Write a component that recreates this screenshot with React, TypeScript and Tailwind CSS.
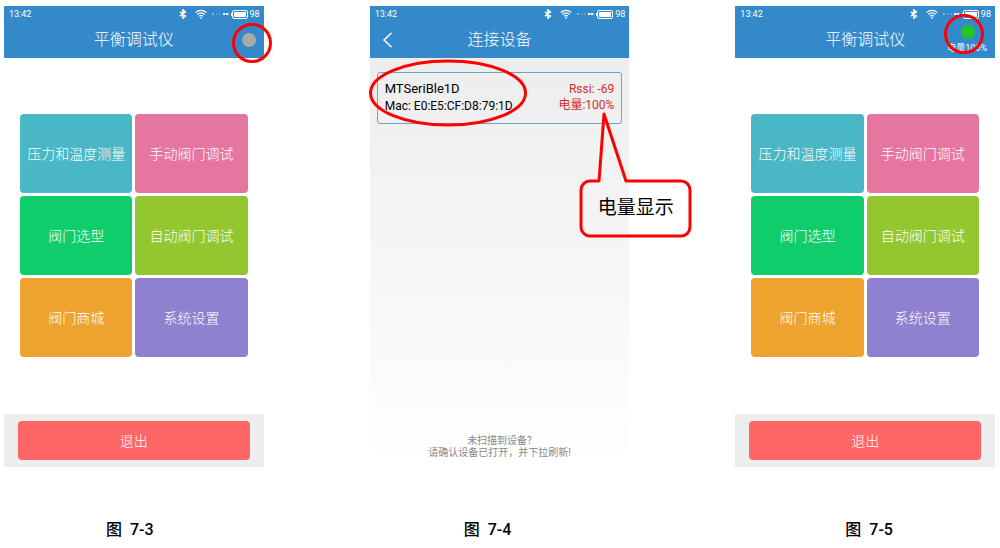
import type { ReactNode } from 'react';

const tiles = [
  { label: '压力和温度测量', color: 'bg-[#49b7c5]' },
  { label: '手动阀门调试', color: 'bg-[#e5769f]' },
  { label: '阀门选型', color: 'bg-[#10cd6b]' },
  { label: '自动阀门调试', color: 'bg-[#93c72f]' },
  { label: '阀门商城', color: 'bg-[#eda32e]' },
  { label: '系统设置', color: 'bg-[#8f81d0]' },
];

function StatusBar() {
  return (
    <div className="flex h-4 items-center pl-[5px] pr-1 text-[9px] leading-4 text-white">
      <span className="flex-1">13:42</span>
      <svg width="8" height="10" viewBox="0 0 8 10" className="mr-2" fill="none" stroke="#fff" strokeWidth="1.5">
        <path d="M1 2.8 6.4 7 3.9 9.2V.8L6.4 3 1 7.2" />
      </svg>
      <svg width="12" height="10" viewBox="0 0 12 10" className="mr-1" fill="none" stroke="#fff" strokeWidth="1.2">
        <path d="M.6 3.6a7.6 7.6 0 0 1 10.8 0M2.4 5.5a5 5 0 0 1 7.2 0M4.2 7.3a2.6 2.6 0 0 1 3.6 0" />
        <circle cx="6" cy="8.8" r=".9" fill="#fff" stroke="none" />
      </svg>
      <svg width="18" height="4" viewBox="0 0 18 4" className="mr-[2px]" fill="#fff">
        <rect x="1" y="1" width="2" height="2" opacity=".4" />
        <rect x="5" y="1.5" width="2" height="1" opacity=".3" />
        <rect x="8" y="1.5" width="2" height="1" opacity=".3" />
        <rect x="12" y="1" width="2.4" height="2" />
        <rect x="15" y="1" width="2.4" height="2" />
      </svg>
      <svg width="17" height="9" viewBox="0 0 17 9" className="mr-[2px]">
        <rect x="0" y="3" width="2" height="3" fill="#fff" />
        <rect x="1.5" y=".5" width="15" height="8" rx="1.5" fill="none" stroke="#fff" />
        <rect x="3" y="2" width="12" height="5" fill="#fff" />
      </svg>
      <span>98</span>
    </div>
  );
}

function Header({ title, children }: { title: string; children?: ReactNode }) {
  return (
    <header className="relative bg-[#3489ca] text-white">
      <StatusBar />
      <h1 className="h-9 text-center text-base leading-9 font-light">{title}</h1>
      {children}
    </header>
  );
}

function HomeScreen({ children }: { children: ReactNode }) {
  return (
    <div>
      <Header title="平衡调试仪">{children}</Header>
      <div className="mt-14 grid grid-cols-2 gap-[3px] px-4">
        {tiles.map((tile) => (
          <button key={tile.label} className={`h-[79px] rounded text-sm font-light text-white ${tile.color}`}>
            {tile.label}
          </button>
        ))}
      </div>
      <div className="mt-[57px] bg-[#ededed] px-[14px] py-[7px]">
        <button className="h-[39px] w-full rounded bg-[#ff6666] text-sm font-light text-white">退出</button>
      </div>
    </div>
  );
}

function DeviceScreen() {
  return (
    <div className="relative flex flex-1 flex-col bg-linear-to-b from-[#ebebeb] to-white">
      <Header title="连接设备">
        <button aria-label="返回" className="absolute left-3 top-[26px]">
          <svg width="11" height="16" viewBox="0 0 11 16" fill="none" stroke="#fff" strokeWidth="1.6">
            <path d="M9.5 1 2 8l7.5 7" />
          </svg>
        </button>
      </Header>
      <div className="mx-[7px] mt-[14px] flex justify-between rounded-[3px] border border-[#69a5cb] px-[7px] py-2">
        <div className="text-black">
          <p className="text-[13px] leading-4">MTSeriBle1D</p>
          <p className="text-xs leading-[18px]">Mac: E0:E5:CF:D8:79:1D</p>
        </div>
        <div className="text-right text-xs leading-4 text-[#d62b2e]">
          <p>Rssi: -69</p>
          <p>电量:100%</p>
        </div>
      </div>
      <div className="mt-auto pb-2 text-center text-[10px] leading-3 text-[#888]">
        <p>未扫描到设备?</p>
        <p>请确认设备已打开，并下拉刷新!</p>
      </div>

      {/* highlight and battery callout drawn over the screen */}
      <svg className="absolute left-[-2px] top-[53px]" width="160" height="68" fill="none" stroke="#f00" strokeWidth="3">
        <ellipse cx="80" cy="34" rx="77.5" ry="32" />
      </svg>
      <div className="absolute left-[209px] top-[104px] h-[128px] w-[114px]">
        <svg width="114" height="128" fill="none" stroke="#f00" strokeWidth="3" strokeLinejoin="round">
          <path d="M20 71 25 4l22 67h55a9 9 0 0 1 9 9v37a9 9 0 0 1-9 9H11a9 9 0 0 1-9-9V80a9 9 0 0 1 9-9z" />
        </svg>
        <p className="absolute inset-x-0 top-[86px] text-center text-[19px] leading-6 text-black">电量显示</p>
      </div>
    </div>
  );
}

function Caption({ number, className = '' }: { number: string; className?: string }) {
  return (
    <figcaption className={`mt-[51px] text-center text-base leading-6 font-medium text-black ${className}`}>
      图 <span className="ml-1">{number}</span>
    </figcaption>
  );
}

export default function App() {
  return (
    <main className="grid grid-cols-3 gap-[106px] bg-white pl-1 pr-[5px] pt-[6px] font-['Roboto','Noto_Sans_CJK_SC',sans-serif]">
      <figure className="flex flex-col">
        <HomeScreen>
          <span className="absolute right-2 top-[27px] size-[14px] rounded-full bg-[#a9a9a9]" />
          <span className="absolute -right-2 top-[17px] size-10 rounded-full border-3 border-[#f00]" />
        </HomeScreen>
        <Caption number="7-3" className="pr-2" />
      </figure>

      <figure className="flex flex-col">
        <DeviceScreen />
        <Caption number="7-4" className="pr-6" />
      </figure>

      <figure className="flex flex-col">
        <HomeScreen>
          <span className="absolute right-5 top-[19px] size-[14px] rounded-full bg-[#22c425]" />
          <span className="absolute bottom-1 right-2 text-[9px] leading-3">电量100%</span>
          <span className="absolute right-[11px] top-2 size-10 rounded-full border-3 border-[#f00]" />
        </HomeScreen>
        <Caption number="7-5" className="pl-2" />
      </figure>
    </main>
  );
}
